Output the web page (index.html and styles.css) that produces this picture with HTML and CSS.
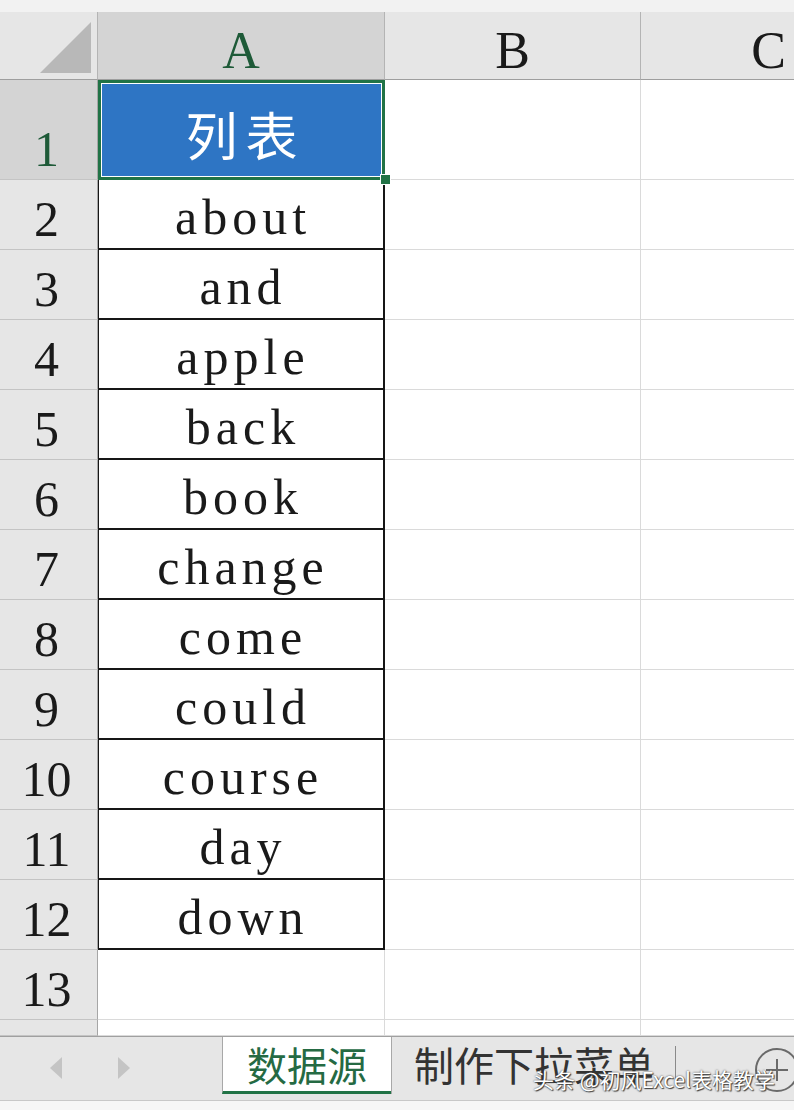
FILE: index.html
```html
<!DOCTYPE html>
<html lang="zh-CN">
<head>
    <meta charset="UTF-8">
    <title>数据源</title>
    <link rel="stylesheet" href="styles.css">
</head>
<body>

<div class="top"></div>

<!--表格区-->
<div class="sheet">
    <div class="corner"><span class="tri"></span></div>
    <div class="colhead on">A</div>
    <div class="colhead">B</div>
    <div class="colhead">C</div>

    <div class="rowhead on">1</div>
    <div class="cell a1"><div class="fill">列表</div><span class="handle"></span></div>
    <div class="cell"></div>
    <div class="cell"></div>

    <div class="rowhead">2</div><div class="cell data"><span>about</span></div><div class="cell"></div><div class="cell"></div>
    <div class="rowhead">3</div><div class="cell data"><span>and</span></div><div class="cell"></div><div class="cell"></div>
    <div class="rowhead">4</div><div class="cell data"><span>apple</span></div><div class="cell"></div><div class="cell"></div>
    <div class="rowhead">5</div><div class="cell data"><span>back</span></div><div class="cell"></div><div class="cell"></div>
    <div class="rowhead">6</div><div class="cell data"><span>book</span></div><div class="cell"></div><div class="cell"></div>
    <div class="rowhead">7</div><div class="cell data"><span>change</span></div><div class="cell"></div><div class="cell"></div>
    <div class="rowhead">8</div><div class="cell data"><span>come</span></div><div class="cell"></div><div class="cell"></div>
    <div class="rowhead">9</div><div class="cell data"><span>could</span></div><div class="cell"></div><div class="cell"></div>
    <div class="rowhead">10</div><div class="cell data"><span>course</span></div><div class="cell"></div><div class="cell"></div>
    <div class="rowhead">11</div><div class="cell data"><span>day</span></div><div class="cell"></div><div class="cell"></div>
    <div class="rowhead">12</div><div class="cell data"><span>down</span></div><div class="cell"></div><div class="cell"></div>
    <div class="rowhead">13</div><div class="cell"></div><div class="cell"></div><div class="cell"></div>
    <div class="rowhead"></div><div class="cell"></div><div class="cell"></div><div class="cell"></div>
</div>

<!--工作表标签-->
<div class="tabs">
    <div class="nav">
        <span class="prev"></span>
        <span class="next"></span>
    </div>
    <div class="tab active">数据源</div>
    <div class="tab">制作下拉菜单</div>
    <span class="sep"></span>
    <span class="add"></span>
</div>
<div class="status"></div>

<!--水印-->
<div class="mark">头条 @初风Excel表格教学</div>

</body>
</html>
```

FILE: styles.css
```css
* {
margin: 0;
padding: 0;
box-sizing: border-box;
}

body {
width: 794px;
height: 1110px;
overflow: hidden;
background-color: #fff;
font-family: "Liberation Serif", serif;
color: #1a1a1a;
position: relative;
}

.top {
height: 12px;
background-color: #f2f2f2;
}

/*四列：行号、A、B、C（C超出窗口）*/
.sheet {
width: 794px;
overflow: hidden;
display: grid;
grid-template-columns: 98px 287px 256px 256px;
grid-template-rows: 68px 100px repeat(12, 70px) 16px;
}

.corner {
background-color: #e6e6e6;
border-right: 1px solid #b4b4b4;
border-bottom: 1px solid #9e9e9e;
position: relative;
}

.corner .tri {
position: absolute;
left: 40px;
top: 10px;
width: 0;
height: 0;
border-left: 51px solid transparent;
border-bottom: 51px solid #b8b8b8;
}

.colhead {
background-color: #e6e6e6;
border-right: 1px solid #b4b4b4;
border-bottom: 1px solid #9e9e9e;
font-size: 52px;
text-align: center;
line-height: 78px;
}

.colhead.on {
background-color: #d4d4d4;
color: #1e5a38;
}

.rowhead {
background-color: #e6e6e6;
border-right: 1px solid #a6a6a6;
border-bottom: 1px solid #c4c4c4;
font-size: 50px;
text-align: center;
display: flex;
align-items: flex-end;
justify-content: center;
line-height: 60px;
padding-right: 4px;
}

.rowhead.on {
background-color: #d4d4d4;
color: #1e5a38;
}

.cell {
border-right: 1px solid #dadada;
border-bottom: 1px solid #dadada;
}

/*选中的A1*/
.cell.a1 {
position: relative;
padding: 4px;
border: none;
box-shadow: inset 0 0 0 3px #217346;
}

.a1 .fill {
height: 100%;
background-color: #2e75c4;
color: #fff;
font-family: "Noto Sans CJK SC", sans-serif;
font-size: 52px;
letter-spacing: 8px;
padding-left: 8px;
padding-top: 6px;
display: flex;
align-items: center;
justify-content: center;
}

.a1 .handle {
position: absolute;
right: -6px;
bottom: -5px;
width: 11px;
height: 11px;
background-color: #217346;
border: 1px solid #fff;
z-index: 2;
}

/*带黑框的数据*/
.cell.data {
border-right: 2px solid #161616;
border-bottom: 2px solid #161616;
box-shadow: inset 1px 0 0 #161616;
display: flex;
align-items: flex-end;
justify-content: center;
font-size: 50px;
line-height: 62px;
letter-spacing: 5px;
padding-left: 5px;
}

.tabs {
height: 65px;
background-color: #e6e6e6;
border-top: 1px solid #a0a0a0;
border-bottom: 1px solid #c8c8c8;
display: flex;
align-items: flex-start;
overflow: hidden;
font-family: "Noto Sans CJK SC", sans-serif;
}

.nav {
width: 222px;
height: 100%;
display: flex;
align-items: center;
padding-left: 50px;
padding-bottom: 2px;
flex-shrink: 0;
}

.prev,
.next {
width: 0;
height: 0;
border-top: 11px solid transparent;
border-bottom: 11px solid transparent;
}

.prev {
border-right: 12px solid #c4c4c4;
}

.next {
border-left: 12px solid #c4c4c4;
margin-left: 56px;
}

.tab {
height: 57px;
font-size: 40px;
line-height: 54px;
color: #333;
border-left: 1px solid #a8a8a8;
padding: 0 21px 0 22px;
white-space: nowrap;
flex-shrink: 0;
}

.tab.active {
width: 169px;
padding: 0;
text-align: center;
background-color: #fff;
color: #256a43;
border-bottom: 3px solid #217346;
}

.sep {
width: 1px;
height: 38px;
margin-top: 9px;
background-color: #8a8a8a;
flex-shrink: 0;
}

/*加号*/
.add {
width: 44px;
height: 44px;
margin-top: 11px;
margin-left: 79px;
border: 2px solid #6a6a6a;
border-radius: 50%;
position: relative;
flex-shrink: 0;
}

.add::before,
.add::after {
content: "";
position: absolute;
background-color: #6a6a6a;
left: 50%;
top: 50%;
}

.add::before {
width: 22px;
height: 2px;
margin-left: -11px;
margin-top: -1px;
}

.add::after {
width: 2px;
height: 22px;
margin-left: -1px;
margin-top: -11px;
}

/*水印*/
.mark {
position: absolute;
left: 533px;
top: 1064px;
font-family: "Noto Sans CJK SC", sans-serif;
font-size: 21px;
color: #fff;
white-space: nowrap;
text-shadow: 0 0 2px #333, 1px 1px 1px #444;
}

.status {
height: 9px;
background-color: #f6f6f6;
}
```
